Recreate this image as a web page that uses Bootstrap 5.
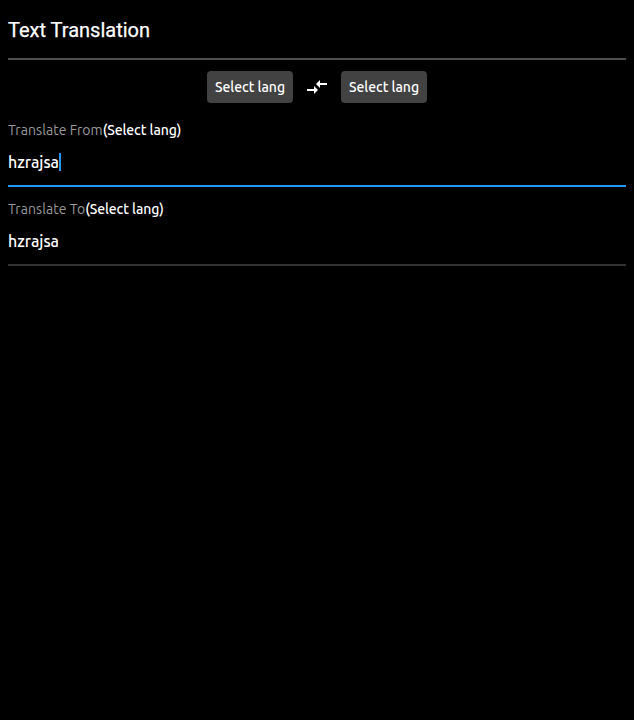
<!DOCTYPE html>
<html lang="en" data-bs-theme="dark">
<head>
<meta charset="utf-8">
<meta name="viewport" content="width=device-width, initial-scale=1">
<title>Text Translation</title>
<link href="https://cdn.jsdelivr.net/npm/bootstrap@5.3.0/dist/css/bootstrap.min.css" rel="stylesheet">
<style>
body { background: #000; color: #fff; font-family: Ubuntu, "Noto Sans", sans-serif; }
.page-title { height: 60px; font: 400 20px/60px Roboto, sans-serif; -webkit-text-stroke: .25px #fff; border-bottom: 2px solid #4f4f4f; }
.lang-row { height: 32px; margin-top: 11px; gap: 12px; }
.btn-lang { --bs-btn-color: #fff; --bs-btn-bg: #424242; --bs-btn-hover-bg: #505050; --bs-btn-hover-color: #fff; --bs-btn-border-width: 0; width: 86px; height: 32px; border-radius: 4px; font-size: 14px; line-height: 32px; font-weight: 500; letter-spacing: -.05px; }
.field-label { height: 20px; font-size: 14px; line-height: 20px; color: #999; letter-spacing: .06px; }
.field-label span { display: inline-block; white-space: nowrap; }
.field-label .picked { color: #fff; font-weight: 500; letter-spacing: -.08px; }
.field-value { height: 47px; padding-top: 10px; font-size: 16px; font-weight: 500; line-height: 24px; letter-spacing: -.05px; border-bottom: 2px solid #333; }
.field-value.active { border-color: #2196f3; }
.caret { width: 2px; height: 18px; background: #2196f3; margin-top: 3px; }
.first-field { margin-top: 17px; }
.second-field { margin-top: 12px; }
</style>
</head>
<body>
<main class="px-2">
  <h1 class="page-title m-0">Text Translation</h1>
  <div class="lang-row d-flex justify-content-center align-items-center">
    <button class="btn btn-lang p-0" type="button">Select lang</button>
    <svg width="24" height="24" viewBox="0 0 24 24" fill="#fff" aria-hidden="true"><path d="M9.01 14H2v2h7.01v3L13 15l-3.99-4v3zm5.98-1v-3H22V8h-7.01V5L11 9l3.99 4z"/></svg>
    <button class="btn btn-lang p-0" type="button">Select lang</button>
  </div>
  <section class="first-field">
    <div class="field-label d-flex"><span>Translate From</span><span class="picked">(Select lang)</span></div>
    <div class="field-value active d-flex"><span>hzrajsa</span><span class="caret"></span></div>
  </section>
  <section class="second-field">
    <div class="field-label d-flex"><span>Translate To</span><span class="picked">(Select lang)</span></div>
    <div class="field-value d-flex"><span>hzrajsa</span></div>
  </section>
</main>
<script src="https://cdn.jsdelivr.net/npm/bootstrap@5.3.0/dist/js/bootstrap.bundle.min.js"></script>
</body>
</html>
